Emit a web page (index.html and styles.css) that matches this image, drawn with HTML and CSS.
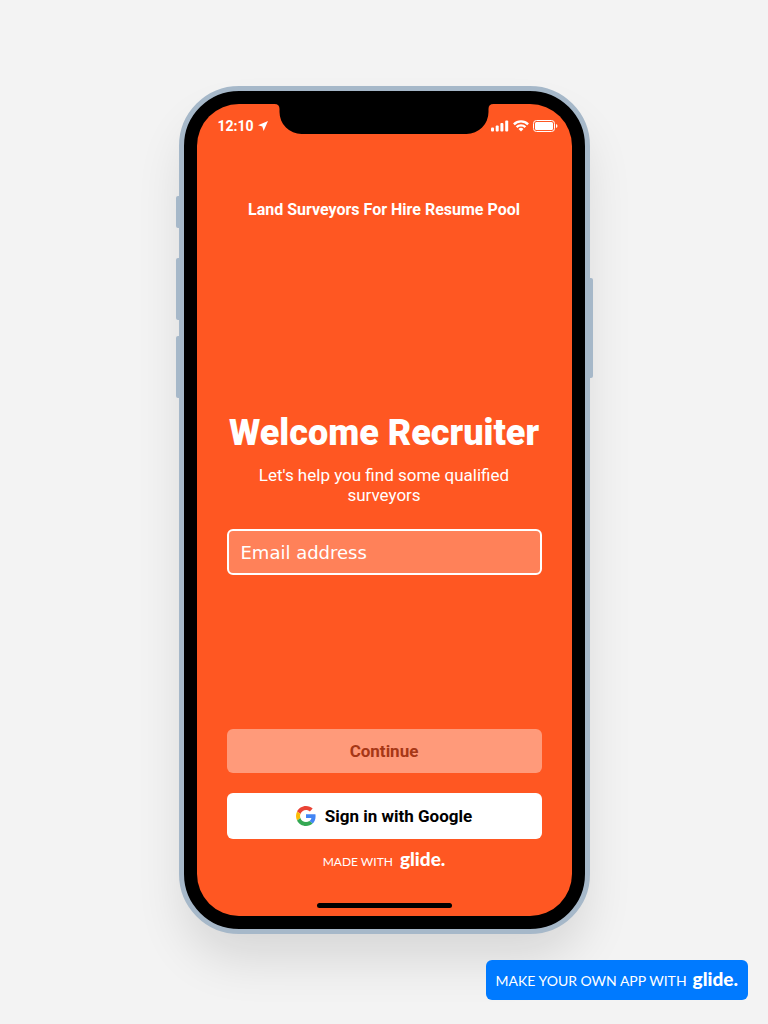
FILE: index.html
```html
<!DOCTYPE html>
<html lang="en">
<head>
<meta charset="utf-8">
<meta name="viewport" content="width=device-width, initial-scale=1">
<title>Land Surveyors For Hire Resume Pool</title>
<link rel="stylesheet" href="styles.css">
</head>
<body>
<main class="stage">
  <div class="phone">
    <span class="side-key mute"></span>
    <span class="side-key volume-up"></span>
    <span class="side-key volume-down"></span>
    <span class="side-key power"></span>
    <section class="screen">
      <svg class="notch" width="219" height="30" viewBox="0 0 219 30" aria-hidden="true"><path d="M0 0H219Q214 0 214 5V8A22 22 0 0 1 192 30H27A22 22 0 0 1 5 8V5Q5 0 0 0Z"/></svg>
      <div class="status">
        <div class="clock">
          <span>12:10</span>
          <svg width="10" height="10" viewBox="0 0 10 10" aria-hidden="true"><path fill="#fff" d="M10 0L0 4.200L4.300 5.500L5.600 10Z"/></svg>
        </div>
        <div class="signals">
          <svg width="18" height="12" viewBox="0 0 18 12" aria-hidden="true"><g fill="#fff"><rect y="7.500" width="3" height="4" rx="1"/><rect x="4.700" y="5.500" width="3" height="6" rx="1"/><rect x="9.400" y="3" width="3" height="8.500" rx="1"/><rect x="14.200" y=".5" width="3" height="11" rx="1"/></g></svg>
          <svg width="16" height="12" viewBox="0 0 16 12" aria-hidden="true"><g fill="none" stroke="#fff" stroke-width="2.400"><path d="M.9 4.300A10 10 0 0 1 15.100 4.300"/><path d="M3.600 7.200A6.200 6.200 0 0 1 12.400 7.200"/></g><path fill="#fff" d="M5.500 9A3.600 3.600 0 0 1 10.500 9L8 11.500Z"/></svg>
          <svg width="25" height="12" viewBox="0 0 25 12" aria-hidden="true"><rect x=".5" y=".5" width="21" height="11" rx="3" fill="none" stroke="#fff"/><rect x="2" y="2" width="18" height="8" rx="1.500" fill="#fff"/><path fill="#fff" d="M23 4Q24.500 4.500 24.500 6T23 8Z"/></svg>
        </div>
      </div>
      <form class="login">
        <h2 class="app-name">Land Surveyors For Hire Resume Pool</h2>
        <div class="welcome">
          <h1 class="headline">Welcome Recruiter</h1>
          <p class="intro">Let's help you find some qualified surveyors</p>
          <input class="email" type="email" placeholder="Email address" aria-label="Email address">
        </div>
        <div class="actions">
          <button class="button continue" type="submit" disabled>Continue</button>
          <button class="button google" type="button">
            <svg width="20" height="20" viewBox="0 0 48 48" aria-hidden="true"><path fill="#EA4335" d="M24 9.500c3.540 0 6.710 1.220 9.210 3.600l6.850-6.850C35.900 2.380 30.470 0 24 0 14.620 0 6.510 5.380 2.560 13.220l7.980 6.190C12.430 13.720 17.740 9.500 24 9.500z"/><path fill="#4285F4" d="M46.980 24.550c0-1.570-.15-3.090-.38-4.550H24v9.020h12.940c-.58 2.960-2.260 5.480-4.780 7.180l7.730 6c4.510-4.180 7.090-10.360 7.090-17.650z"/><path fill="#FBBC05" d="M10.530 28.590c-.48-1.450-.76-2.990-.76-4.590s.27-3.140.76-4.590l-7.980-6.190C.92 16.460 0 20.120 0 24c0 3.880.92 7.540 2.560 10.780l7.970-6.190z"/><path fill="#34A853" d="M24 48c6.480 0 11.930-2.130 15.890-5.810l-7.730-6c-2.150 1.450-4.920 2.300-8.160 2.300-6.260 0-11.570-4.220-13.470-9.910l-7.980 6.190C6.510 42.620 14.620 48 24 48z"/></svg>
            <span>Sign in with Google</span>
          </button>
          <a class="made-with" href="#">MADE WITH <b class="glide">glide.</b></a>
        </div>
      </form>
      <div class="home-bar"></div>
    </section>
  </div>
</main>
<a class="promo" href="#">MAKE YOUR OWN APP WITH <b class="glide">glide.</b></a>
</body>
</html>
```
FILE: styles.css
```css
* {
  box-sizing: border-box;
}

body {
  margin: 0;
  background: #f3f3f3;
  color: #fff;
  font-family: Roboto, sans-serif;
}

h1, h2, p {
  margin: 0;
}

.stage {
  display: flex;
  align-items: center;
  justify-content: center;
  min-height: 100vh;
  padding: 16px 16px 20px;
}

.phone {
  position: relative;
  display: flex;
  width: 100%;
  max-width: 411px;
  min-height: 848px;
  padding: 13px;
  border: 5px solid #a6b8c9;
  border-radius: 60px;
  background: #000;
  box-shadow: 0 30px 50px -6px rgba(0, 0, 0, 0.12);
}

.side-key {
  position: absolute;
  left: -8px;
  width: 3px;
  border-radius: 2px 0 0 2px;
  background: #a6b8c9;
}

.mute {
  top: 105px;
  height: 32px;
}

.volume-up {
  top: 167px;
  height: 62px;
}

.volume-down {
  top: 245px;
  height: 62px;
}

.power {
  top: 187px;
  right: -8px;
  left: auto;
  height: 100px;
  border-radius: 0 2px 2px 0;
}

.screen {
  position: relative;
  display: flex;
  flex: 1;
  flex-direction: column;
  overflow: hidden;
  border-radius: 42px;
  background: #ff5722;
}

.notch {
  position: absolute;
  top: 0;
  left: 50%;
  transform: translateX(-50%);
}

.status {
  display: flex;
  align-items: center;
  justify-content: space-between;
  height: 43px;
  padding: 0 14px 0 21px;
}

.clock, .signals {
  display: flex;
  align-items: center;
  gap: 4px;
}

.clock {
  font-size: 14px;
  font-weight: 700;
}

.login {
  display: flex;
  flex: 1;
  flex-direction: column;
  justify-content: space-between;
  padding: 53px 30px 29px;
  text-align: center;
}

.app-name {
  font-size: 16px;
  font-weight: 700;
  line-height: 20px;
}

.welcome {
  margin-top: 37px;
}

.headline {
  font-size: 36px;
  font-weight: 900;
  line-height: 44px;
}

.intro {
  margin: 10px 24px 24px;
  font-size: 17px;
  line-height: 20px;
}

.email {
  display: block;
  width: 100%;
  height: 46px;
  padding: 0 12px;
  border: 2px solid #fff;
  border-radius: 6px;
  background: rgba(255, 255, 255, 0.25);
  color: #fff;
  font-family: "DejaVu Sans", sans-serif;
  font-size: 18px;
}

.email::placeholder {
  color: #fff;
  opacity: 1;
}

.actions {
  display: flex;
  flex-direction: column;
}

.button {
  display: flex;
  align-items: center;
  justify-content: center;
  gap: 9px;
  height: 46px;
  border: 0;
  border-radius: 6px;
  font-family: Roboto, sans-serif;
  font-size: 17px;
  font-weight: 700;
}

.continue {
  height: 44px;
  margin-bottom: 20px;
  background: #ff9a7a;
  color: #a63716;
}

.google {
  background: #fff;
  color: #000;
}

.made-with, .promo {
  display: flex;
  align-items: baseline;
  justify-content: center;
  color: #fff;
  font-family: Lato, sans-serif;
  text-decoration: none;
  white-space: nowrap;
}

.made-with {
  gap: 7px;
  margin-top: 8px;
  font-size: 12px;
  line-height: 24px;
}

.glide {
  font-size: 19px;
  font-weight: 900;
}

.home-bar {
  align-self: center;
  width: 36%;
  height: 5px;
  margin-bottom: 8px;
  border-radius: 3px;
  background: #000;
}

.promo {
  position: fixed;
  right: 20px;
  bottom: 24px;
  gap: 6px;
  height: 40px;
  padding: 0 10px;
  border-radius: 6px;
  background: #007aff;
  font-size: 14px;
  line-height: 38px;
}
```
